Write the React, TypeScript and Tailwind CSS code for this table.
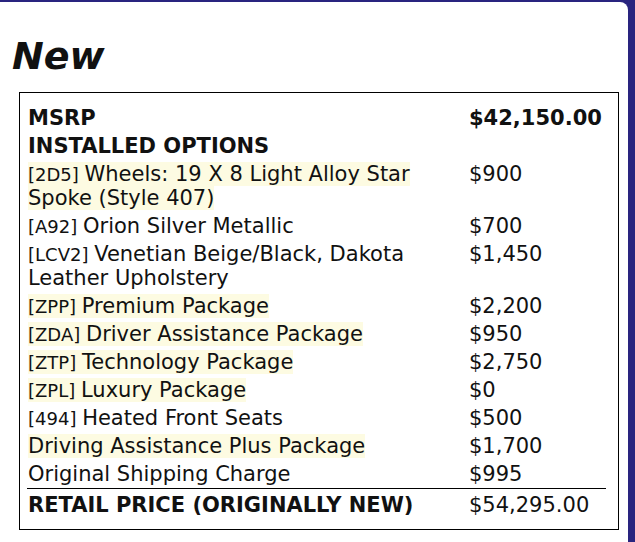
import React from 'react'

type Row = {
    code?: string
    label: string
    price: string
    hl?: boolean
}

const rows: Row[] = [
    { code: '2D5', label: 'Wheels: 19 X 8 Light Alloy Star Spoke (Style 407)', price: '$900', hl: true },
    { code: 'A92', label: 'Orion Silver Metallic', price: '$700' },
    { code: 'LCV2', label: 'Venetian Beige/Black, Dakota Leather Upholstery', price: '$1,450' },
    { code: 'ZPP', label: 'Premium Package', price: '$2,200', hl: true },
    { code: 'ZDA', label: 'Driver Assistance Package', price: '$950', hl: true },
    { code: 'ZTP', label: 'Technology Package', price: '$2,750', hl: true },
    { code: 'ZPL', label: 'Luxury Package', price: '$0', hl: true },
    { code: '494', label: 'Heated Front Seats', price: '$500' },
    { label: 'Driving Assistance Plus Package', price: '$1,700', hl: true },
    { label: 'Original Shipping Charge', price: '$995' },
]

export default function App() {
    return (
        <div className="min-h-screen bg-[#29247f] pt-[2px] pr-[7px] font-['DejaVu_Sans',sans-serif] text-[#111]">
            <div className="bg-white rounded-tr-[8px] h-[540px] pl-[12px] pt-[32px]">
                <h1 className="text-[38px] leading-[44px] font-bold italic">New</h1>

                <div className="ml-[7px] mt-[14px] w-[600px] border border-black pl-[8px] pt-[11px] pb-[12px]">
                    <div className="grid grid-cols-[441px_1fr] text-[21px] leading-[24px]">
                        <div className="py-[2px] font-bold">MSRP</div>
                        <div className="py-[2px] font-bold">$42,150.00</div>

                        <div className="py-[2px] font-bold col-span-2">INSTALLED OPTIONS</div>

                        {rows.map((r, i) => (
                            <React.Fragment key={i}>
                                <div className="py-[2px] pr-[20px]">
                                    <span className={r.hl ? 'bg-[#fdfbe2]' : ''}>
                                        {r.code && <span className="text-[18px] leading-none">[{r.code}] </span>}
                                        {r.label}
                                    </span>
                                </div>
                                <div className="py-[2px]">{r.price}</div>
                            </React.Fragment>
                        ))}
                    </div>

                    <div className="mr-[12px] -ml-[1px] border-t border-black pl-[1px] pt-[4px] grid grid-cols-[441px_1fr] text-[21px] leading-[24px]">
                        <div className="font-bold">RETAIL PRICE (ORIGINALLY NEW)</div>
                        <div>$54,295.00</div>
                    </div>
                </div>
            </div>
        </div>
    )
}
